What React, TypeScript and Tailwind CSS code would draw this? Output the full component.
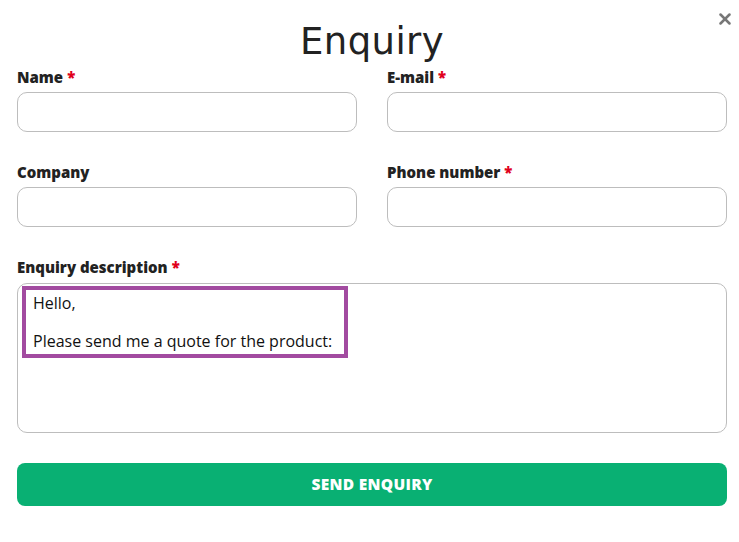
import { X } from 'lucide-react';

type FieldProps = {
  label: string;
  required?: boolean;
};

function Label({ label, required }: FieldProps) {
  return (
    <label className="block text-[15px] font-extrabold leading-5 text-[#222]">
      {label}
      {required && <span className="ml-[4px] text-[#e0001b]">*</span>}
    </label>
  );
}

function Field({ label, required }: FieldProps) {
  return (
    <div>
      <Label label={label} required={required} />
      <input className="mt-[5px] block h-10 w-full rounded-[10px] border border-[#bdbdbd] bg-white px-3 outline-none" />
    </div>
  );
}

export default function App() {
  return (
    <div
      className="relative min-h-[542px] w-full bg-white pl-[17px] pr-[12px] pt-[16px]"
      style={{ fontFamily: '"Open Sans", "Liberation Sans", sans-serif' }}
    >
      {/* close button */}
      <button className="absolute right-[5px] top-[10px] text-[#777]">
        <X size={18} strokeWidth={3.4} />
      </button>

      <h1
        className="h-[46px] text-center text-[37px] leading-[52px] tracking-[0.4px] text-[#222]"
        style={{ fontFamily: '"DejaVu Sans", "Open Sans", sans-serif', fontWeight: 400 }}
      >
        Enquiry
      </h1>

      <div className="mt-[5px] grid grid-cols-2 gap-x-[30px] gap-y-[30px]">
        <Field label="Name" required />
        <Field label="E-mail" required />
        <Field label="Company" />
        <Field label="Phone number" required />
      </div>

      <div className="mt-[30px]">
        <Label label="Enquiry description" required />
        <div className="relative mt-[6px] h-[150px] rounded-[10px] border border-[#bdbdbd] bg-white px-[15px] pt-[10px] text-[16px] leading-[19px] text-[#111]">
          <p>Hello,</p>
          <p className="mt-[19px]">Please send me a quote for the product:</p>
          {/* highlight frame */}
          <div className="pointer-events-none absolute left-[4px] top-[2px] h-[72px] w-[326px] border-4 border-[#a24ba0]" />
        </div>
      </div>

      <button className="mt-[30px] flex h-[43px] w-full items-center justify-center rounded-[8px] bg-[#09b073] text-[15.5px] font-extrabold tracking-[0.3px] text-white">
        SEND ENQUIRY
      </button>
    </div>
  );
}
